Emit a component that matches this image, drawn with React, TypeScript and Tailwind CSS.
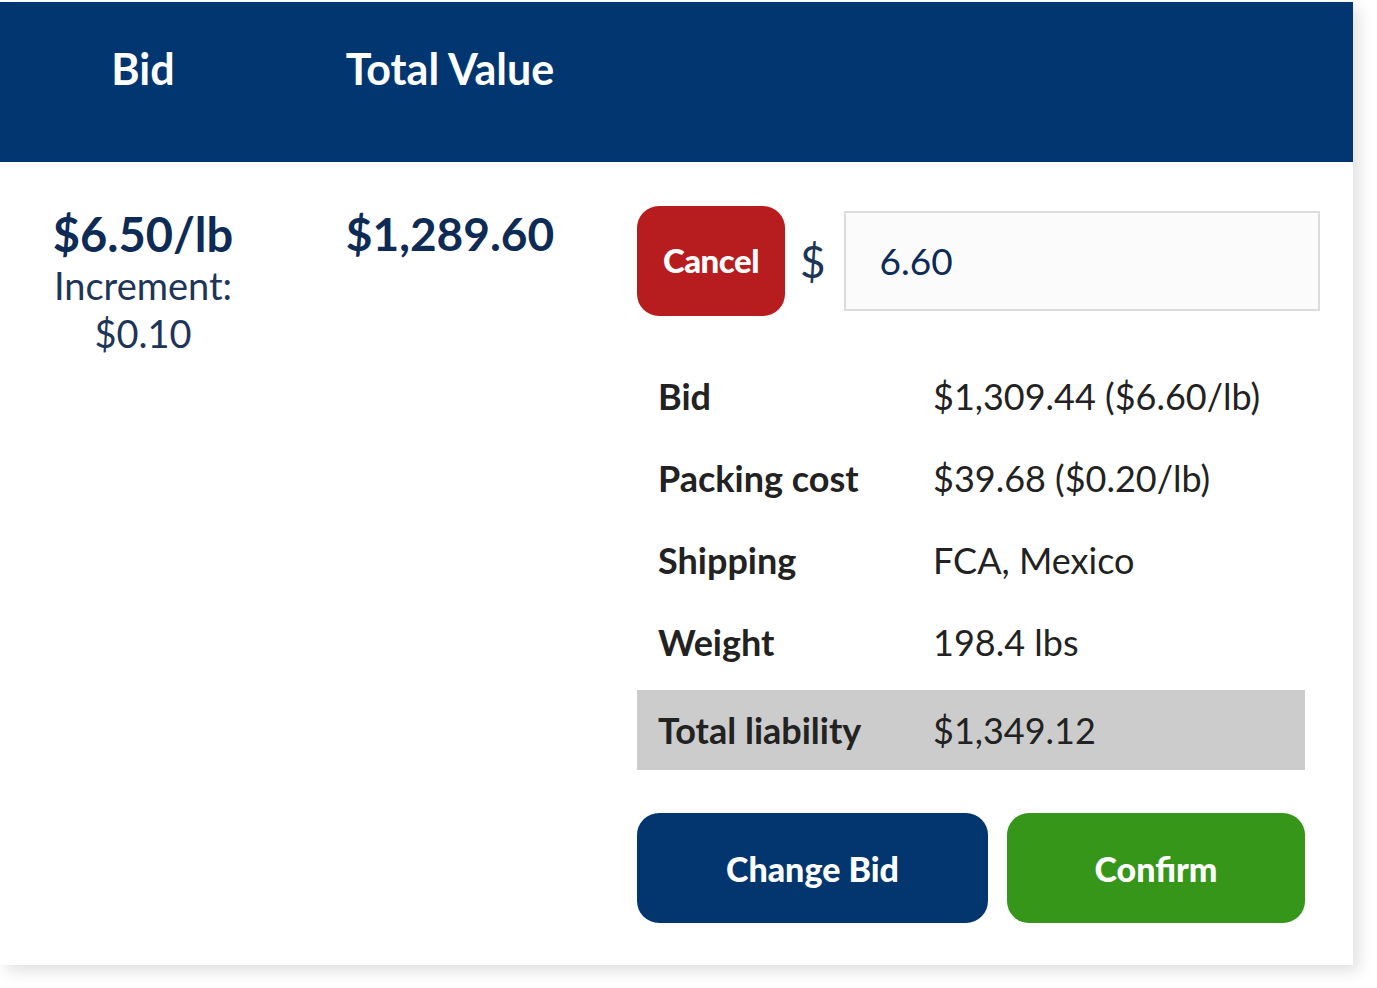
import React from "react";

const rows = [
  { label: "Bid", value: "$1,309.44 ($6.60/lb)" },
  { label: "Packing cost", value: "$39.68 ($0.20/lb)" },
  { label: "Shipping", value: "FCA, Mexico" },
  { label: "Weight", value: "198.4 lbs" },
];

export default function App() {
  return (
    <div className="w-[1377px] h-[988px] bg-white overflow-hidden font-['Lato','Noto_Sans',sans-serif]">
      <div className="w-[1353px] h-[963px] mt-[2px] bg-white shadow-[6px_6px_14px_rgba(0,0,0,0.12)] flex flex-col">
        <div className="h-[160px] bg-[#023670] flex items-start pt-[42px] text-white font-bold text-[43px] leading-[50px]">
          <div className="w-[286px] text-center">Bid</div>
          <div className="w-[328px] text-center">Total Value</div>
        </div>
        <div className="flex">
          <div className="w-[286px] shrink-0 text-center pt-[45px] text-[#0d2b55]">
            <div className="font-bold text-[47px] leading-[54px]">$6.50/lb</div>
            <div className="text-[38px] leading-[48px] text-[#1d3557]">Increment:</div>
            <div className="text-[38px] leading-[48px] text-[#1d3557]">$0.10</div>
          </div>
          <div className="w-[328px] shrink-0 text-center pt-[45px] text-[#0d2b55]">
            <div className="font-bold text-[46px] leading-[54px]">$1,289.60</div>
          </div>
          <div className="pl-[23px] pt-[44px] flex flex-col w-[730px] shrink-0">
            <div className="flex items-center">
              <button className="shrink-0 w-[148px] h-[110px] rounded-[22px] bg-[#b71c1e] text-white font-black text-[33px] tracking-[-0.5px]">
                Cancel
              </button>
              <span className="shrink-0 ml-[15px] text-[44px] text-[#1d3557]">$</span>
              <div className="shrink-0 ml-[18px] w-[476px] h-[100px] border-2 border-[#dcdcdc] bg-[#fbfbfb] flex items-center pl-[34px] text-[37px] text-[#0d2b55]">
                6.60
              </div>
            </div>
            <div className="mt-[39px] w-[668px] text-[36px] text-[#222]">
              {rows.map((r) => (
                <div key={r.label} className="h-[82px] flex items-center pl-[21px]">
                  <div className="w-[275px] font-bold">{r.label}</div>
                  <div>{r.value}</div>
                </div>
              ))}
              <div className="mt-[7px] h-[80px] flex items-center pl-[21px] bg-[#cccccc]">
                <div className="w-[275px] font-bold">Total liability</div>
                <div>$1,349.12</div>
              </div>
            </div>
            <div className="mt-[43px] flex gap-[19px]">
              <button className="w-[351px] h-[110px] rounded-[22px] bg-[#03366e] text-white font-black text-[34px]">
                Change Bid
              </button>
              <button className="w-[298px] h-[110px] rounded-[22px] bg-[#36961a] text-white font-black text-[34px]">
                Confirm
              </button>
            </div>
          </div>
        </div>
      </div>
    </div>
  );
}
